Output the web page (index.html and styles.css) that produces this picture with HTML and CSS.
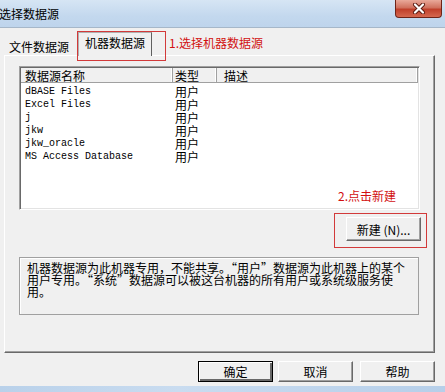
FILE: index.html
```html
<!DOCTYPE html>
<html>
<head>
  <title>选择数据源</title>
  <link rel="stylesheet" href="styles.css">
</head>
<body>
  <div class="window">
    <div class="titlebar">
      <span class="title">选择数据源</span>
      <div class="close">
        <svg width="14" height="11" viewBox="0 0 14 11">
          <path d="M3 1.5 L11 9.5 M11 1.5 L3 9.5" stroke="#5a1a10" stroke-width="4" stroke-linecap="round"/>
          <path d="M3 1.5 L11 9.5 M11 1.5 L3 9.5" stroke="#ffffff" stroke-width="2.2" stroke-linecap="round"/>
        </svg>
      </div>
    </div>

    <div class="client">
      <div class="tabs">
        <div class="tab">文件数据源</div>
        <div class="tab active">机器数据源</div>
        <div class="note note-tab">1.选择机器数据源</div>
        <div class="mark mark-tab"></div>
      </div>

      <div class="panel">
        <div class="listview">
          <div class="lv-head">
            <div class="col c1">数据源名称</div>
            <div class="col c2">类型</div>
            <div class="col c3">描述</div>
          </div>
          <div class="lv-row"><span class="c1 mono">dBASE Files</span><span class="c2">用户</span></div>
          <div class="lv-row"><span class="c1 mono">Excel Files</span><span class="c2">用户</span></div>
          <div class="lv-row"><span class="c1 mono">j</span><span class="c2">用户</span></div>
          <div class="lv-row"><span class="c1 mono">jkw</span><span class="c2">用户</span></div>
          <div class="lv-row"><span class="c1 mono">jkw_oracle</span><span class="c2">用户</span></div>
          <div class="lv-row"><span class="c1 mono">MS Access Database</span><span class="c2">用户</span></div>
        </div>

        <div class="note note-new">2.点击新建</div>

        <div class="new-wrap">
          <button class="btn btn-new">新建 (N)...</button>
        </div>

        <div class="desc">
          <div class="line">机器数据源为此机器专用，不能共享。“用户”数据源为此机器上的某个</div>
          <div class="line">用户专用。“系统”数据源可以被这台机器的所有用户或系统级服务使</div>
          <div class="line">用。</div>
        </div>
      </div>

      <div class="buttons">
        <button class="btn default">确定</button>
        <button class="btn">取消</button>
        <button class="btn btn-help">帮助</button>
      </div>
    </div>
  </div>
</body>
</html>
```

FILE: styles.css
```css
body {
  margin: 0;
  padding: 0;
  background: #a8c4e2;
  font-family: "Noto Sans CJK SC", sans-serif;
  font-size: 12px;
  color: #000;
}

.window {
  width: 445px;
  height: 392px;
  overflow: hidden;
  background: linear-gradient(to right, #b9d1ea, #c9dcf0 40%, #b6cfe9);
}

.titlebar {
  height: 27px;
  display: flex;
  justify-content: space-between;
  align-items: flex-start;
  background: linear-gradient(#d6e5f4, #c3d8ee 60%, #bed4ec);
}

.title {
  margin-left: -1px;
  margin-top: 6px;
  line-height: 16px;
  font-size: 12px;
}

.close {
  width: 45px;
  height: 17px;
  margin-right: 3px;
  border: 1px solid #6e2418;
  border-top: none;
  border-radius: 0 0 4px 4px;
  background: linear-gradient(#e9a99a, #d0715e 45%, #c0402b 55%, #d5684f);
  display: flex;
  justify-content: center;
  align-items: center;
}

.client {
  width: 441px;
  height: 358px;
  background: #f0f0f0;
  border-top: 1px solid #a6b7c9;
  border-right: 1px solid #a6b7c9;
  padding-left: 4px;
  box-sizing: content-box;
  position: relative;
}

.tabs {
  position: relative;
  height: 27px;
  display: flex;
  align-items: flex-end;
}

.tab {
  width: 68px;
  height: 17px;
  margin-left: 1px;
  padding-top: 3px;
  line-height: 17px;
  text-align: center;
}

.tab.active {
  width: 72px;
  height: 22px;
  margin-left: 5px;
  margin-bottom: -1px;
  padding-top: 1px;
  background: #f0f0f0;
  border: 1px solid #b0b0b0;
  border-bottom: none;
  border-right-color: #606060;
  z-index: 2;
}

.note {
  color: #d21010;
  line-height: 17px;
  white-space: nowrap;
}

.note-tab {
  align-self: flex-start;
  margin-top: 6px;
  margin-left: 17px;
}

.mark {
  border: 1px solid #d23a3a;
}

.mark-tab {
  position: absolute;
  left: 73px;
  top: 3px;
  width: 87px;
  height: 28px;
  z-index: 3;
}

.panel {
  position: relative;
  width: 431px;
  height: 298px;
  box-sizing: border-box;
  border-top: 1px solid #ffffff;
  border-left: 1px solid #ffffff;
  border-right: 1px solid #696969;
  border-bottom: 1px solid #696969;
  box-shadow: inset -1px -1px 0 #a0a0a0;
  padding: 10px 0 0 14px;
  display: flex;
  flex-direction: column;
}

.listview {
  width: 401px;
  height: 144px;
  box-sizing: border-box;
  background: #fff;
  border-top: 1px solid #a0a0a0;
  border-left: 1px solid #a0a0a0;
  border-right: 1px solid #ffffff;
  border-bottom: 1px solid #ffffff;
  box-shadow: inset 1px 1px 0 #696969, inset -1px -1px 0 #e3e3e3;
  padding: 1px 0 0 1px;
}

.lv-head {
  display: flex;
  height: 15px;
  width: 397px;
  background: #f0f0f0;
  border-bottom: 1px solid #a0a0a0;
  box-sizing: border-box;
}

.col {
  height: 14px;
  line-height: 15px;
  padding-left: 4px;
  box-sizing: border-box;
  border-right: 1px solid #a0a0a0;
  box-shadow: inset -1px 0 0 #ffffff;
}

.col.c1 { width: 152px; }
.col.c2 { width: 44px; padding-left: 2px; }
.col.c3 { width: 201px; padding-left: 7px; }

.lv-row {
  display: flex;
  height: 13px;
  line-height: 13px;
}

.lv-row:nth-child(2) {
  margin-top: 2px;
}

.lv-row .c1 {
  width: 152px;
  padding-left: 4px;
  box-sizing: border-box;
}

.lv-row .c2 {
  padding-left: 2px;
}

.mono {
  font-family: "Liberation Mono", monospace;
  font-size: 10px;
}

.note-new {
  position: absolute;
  left: 333px;
  top: 131px;
}

.new-wrap {
  width: 93px;
  height: 35px;
  margin-top: 3px;
  margin-left: 315px;
  box-sizing: border-box;
  border: 1px solid #d23a3a;
  padding: 3px 0 0 11px;
}

.btn {
  width: 75px;
  height: 21px;
  padding: 0;
  font-family: "Noto Sans CJK SC", sans-serif;
  font-size: 12px;
  line-height: 18px;
  color: #000;
  background: #f0f0f0;
  border-top: 1px solid #ffffff;
  border-left: 1px solid #ffffff;
  border-right: 1px solid #696969;
  border-bottom: 1px solid #696969;
  box-shadow: inset -1px -1px 0 #a0a0a0;
}

.btn-new {
  height: 24px;
  line-height: 21px;
}

.desc {
  width: 400px;
  height: 58px;
  margin-top: 9px;
  box-sizing: border-box;
  border: 1px solid #a0a0a0;
  box-shadow: inset 1px 1px 0 #ffffff;
  padding: 4px 0 0 7px;
  line-height: 12px;
  font-feature-settings: "fwid";
}

.desc .line {
  white-space: nowrap;
}

.buttons {
  display: flex;
  gap: 5px;
  margin-top: 8px;
  margin-left: 194px;
}

.btn.default {
  border: 1px solid #000;
  box-shadow: inset 1px 1px 0 #ffffff, inset -2px -2px 0 #696969;
}

.btn-help {
  margin-left: 2px;
}
```
